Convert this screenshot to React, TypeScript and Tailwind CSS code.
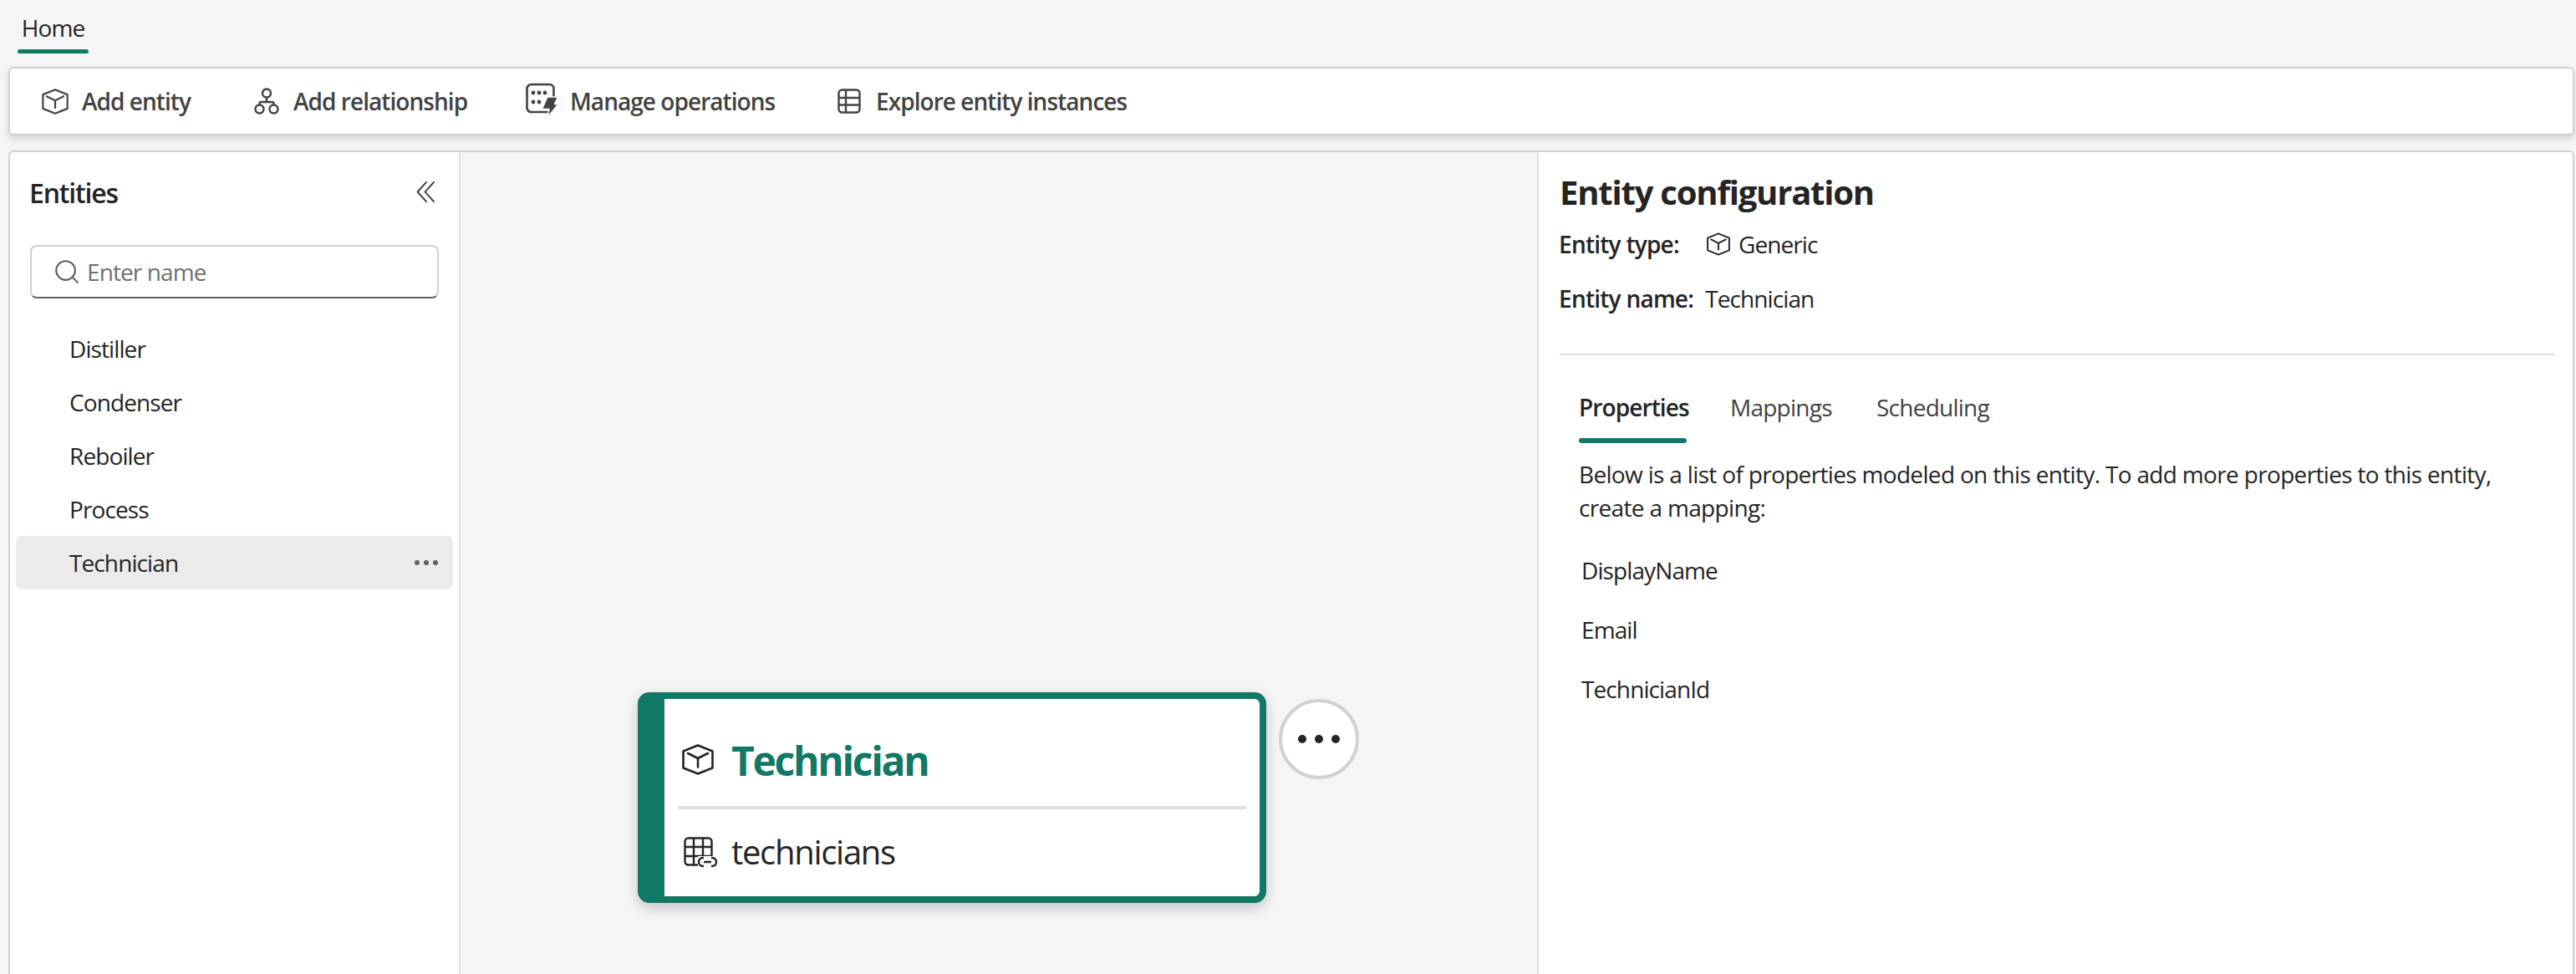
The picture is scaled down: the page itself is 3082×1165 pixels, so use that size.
import { Search } from "lucide-react";

const ENTITIES = ["Distiller", "Condenser", "Reboiler", "Process", "Technician"];
const PROPS = ["DisplayName", "Email", "TechnicianId"];

function CubeIcon({ className }: { className: string }) {
  return (
    <svg viewBox="0 0 38 37" fill="none" stroke="currentColor" strokeWidth={2.6} strokeLinejoin="round" strokeLinecap="round" className={className}>
      <path d="M19 1.5 L36.5 8.5 V28.5 L19 35.5 L1.5 28.5 V8.5 Z" />
      <path d="M7 11 L19 17 L31 11 M19 17 V27.5" />
    </svg>
  );
}

function RelationIcon() {
  return (
    <svg viewBox="0 0 30 32" fill="none" stroke="#424242" strokeWidth={2.4} className="w-[30px] h-[32px] shrink-0">
      <circle cx="15" cy="6.5" r="5" />
      <circle cx="6.5" cy="25.5" r="5" />
      <circle cx="23.5" cy="25.5" r="5" />
      <path d="M15 11.5 V17 M6.5 20.5 V19 Q6.5 17 8.5 17 H21.5 Q23.5 17 23.5 19 V20.5" />
    </svg>
  );
}

function OperationsIcon() {
  return (
    <svg viewBox="0 0 39 42" fill="none" className="w-[39px] h-[42px] shrink-0">
      <rect x="1.5" y="2" width="32" height="33" rx="5" stroke="#424242" strokeWidth={2.6} />
      <g fill="#424242">
        <circle cx="9" cy="12" r="2.4" />
        <circle cx="16" cy="12" r="2.4" />
        <circle cx="23" cy="12" r="2.4" />
        <circle cx="9" cy="23" r="2.4" />
        <circle cx="16" cy="23" r="2.4" />
      </g>
      <path d="M26 17 H38.5 L34.5 25.5 H39 L26 41.5 L28 31.5 H19.5 Z" fill="#424242" stroke="#ffffff" strokeWidth={1.5} strokeLinejoin="round" />
    </svg>
  );
}

function TableIcon() {
  return (
    <svg viewBox="0 0 28 30" fill="none" stroke="#424242" strokeWidth={2.4} className="w-[28px] h-[30px] shrink-0">
      <rect x="1.5" y="1.5" width="25" height="27" rx="4" />
      <path d="M10 1.5 V28.5 M1.5 11 H26.5 M1.5 19.5 H26.5" />
    </svg>
  );
}

function TableLinkIcon() {
  return (
    <svg viewBox="0 0 40 37" fill="none" stroke="#242424" strokeWidth={2.4} className="w-[40px] h-[37px] shrink-0">
      <rect x="1.5" y="1.5" width="32" height="32" rx="4" />
      <path d="M12 1.5 V33.5 M23 1.5 V33.5 M1.5 12 H33.5 M1.5 23 H33.5" />
      <rect x="17" y="23" width="24" height="14" fill="#ffffff" stroke="none" />
      <path d="M24 25 H23 A5 5 0 0 0 23 35 H24 M33 25 H34 A5 5 0 0 1 34 35 H33 M24 30 H33" />
    </svg>
  );
}

function CollapseIcon() {
  return (
    <svg viewBox="0 0 22 25" fill="none" stroke="#424242" strokeWidth={1.9} strokeLinecap="round" strokeLinejoin="round" className="w-[22px] h-[25px] shrink-0">
      <path d="M12 1 L1.5 12.5 L12 24" />
      <path d="M21 1 L10.5 12.5 L21 24" />
    </svg>
  );
}

export default function App() {
  return (
    <div className="w-[3082px] h-[1165px] overflow-hidden bg-[#f5f5f5] font-['Open_Sans',sans-serif] text-[28px] tracking-[-0.9px] text-[#242424]">
      <div className="h-[80px] pl-[21px]">
        <div className="w-[85px] flex flex-col items-center pt-[13px]">
          <span className="h-[40px] leading-[40px] font-medium">Home</span>
          <div className="mt-[6px] h-[5px] w-[85px] rounded-full bg-[#117865]" />
        </div>
      </div>

      <div className="ml-[10px] w-[3070px] h-[82px] flex items-center pl-[38px] bg-white border-2 border-[#d1d1d1] border-b-[#cccccc] rounded-[6px] shadow-[0_4px_8px_rgba(0,0,0,0.14)] font-semibold tracking-[-0.95px] text-[#424242]">
        <CubeIcon className="w-[32px] h-[31px] shrink-0" />
        <span className="ml-[16px] w-[132px] whitespace-nowrap">Add entity</span>
        <div className="ml-[74px]"><RelationIcon /></div>
        <span className="ml-[17px] w-[209px] whitespace-nowrap">Add relationship</span>
        <div className="ml-[69px] -mt-[3px]"><OperationsIcon /></div>
        <span className="ml-[14px] w-[246px] whitespace-nowrap">Manage operations</span>
        <div className="ml-[74px]"><TableIcon /></div>
        <span className="ml-[18px] whitespace-nowrap">Explore entity instances</span>
      </div>

      <div className="ml-[10px] mt-[18px] w-[3070px] h-[985px] flex bg-white border-2 border-b-0 border-[#d1d1d1] rounded-t-[6px]">
        <div className="w-[539px] shrink-0 border-r-2 border-[#e0e0e0]">
          <div className="h-[98px] flex items-center justify-between pl-[23px] pr-[29px]">
            <span className="text-[32px] font-semibold tracking-[-1.2px]">Entities</span>
            <div className="-mt-[4px]"><CollapseIcon /></div>
          </div>
          <div className="mt-[13px] ml-[24px] w-[489px] h-[64px] flex items-center pl-[25px] border-2 border-[#d1d1d1] border-b-[#616161] rounded-[8px] text-[#707070]">
            <Search className="w-[34px] h-[34px] text-[#616161]" strokeWidth={1.5} />
            <span className="ml-[7px]">Enter name</span>
          </div>
          <div className="mt-[28px] mx-[7px]">
            {ENTITIES.map((name) => (
              <div
                key={name}
                className={`h-[64px] flex items-center justify-between pl-[64px] pr-[18px] rounded-[8px] ${name === "Technician" ? "bg-[#ebebeb]" : ""}`}
              >
                <span>{name}</span>
                {name === "Technician" && (
                  <span className="flex gap-[5px]">
                    <span className="size-[6px] rounded-full bg-[#616161]" />
                    <span className="size-[6px] rounded-full bg-[#616161]" />
                    <span className="size-[6px] rounded-full bg-[#616161]" />
                  </span>
                )}
              </div>
            ))}
          </div>
        </div>

        <div className="relative w-[1288px] shrink-0 bg-[#f5f5f5]">
          <div className="absolute left-[212px] top-[646px] w-[752px] h-[252px] bg-white border-[8px] border-l-[32px] border-[#117865] rounded-[14px] shadow-[0_6px_16px_rgba(0,0,0,0.2)]">
            <div className="h-[128px] flex items-center pt-[20px] pl-[21px]">
              <div className="text-[#242424] -mt-[4px]"><CubeIcon className="w-[38px] h-[37px]" /></div>
              <span className="ml-[21px] text-[48px] font-bold tracking-[-2.3px] text-[#117865]">Technician</span>
            </div>
            <div className="mx-[16px] h-[4px] bg-[#e0e0e0]" />
            <div className="h-[104px] flex items-center pl-[23px] pb-[2px]">
              <TableLinkIcon />
              <span className="ml-[17px] text-[40px] tracking-[-1.3px]">technicians</span>
            </div>
          </div>
          <div className="absolute left-[979px] top-[654px] size-[96px] flex items-center justify-center gap-[10px] bg-white border-4 border-[#d1d1d1] rounded-full">
            <span className="size-[10px] rounded-full bg-[#242424]" />
            <span className="size-[10px] rounded-full bg-[#242424]" />
            <span className="size-[10px] rounded-full bg-[#242424]" />
          </div>
        </div>

        <div className="flex-1 border-l-2 border-[#e0e0e0] pl-[23px] pr-[22px] pt-[24px]">
          <div className="ml-[2px] h-[48px] leading-[48px] text-[40px] font-bold tracking-[-1.2px]">Entity configuration</div>
          <div className="mt-[18px] ml-[1px] h-[40px] flex items-center">
            <span className="font-semibold tracking-[-0.75px]">Entity type:</span>
            <CubeIcon className="ml-[33px] w-[28px] h-[28px]" />
            <span className="ml-[10px]">Generic</span>
          </div>
          <div className="mt-[25px] ml-[1px] h-[40px] flex items-center">
            <span className="font-semibold tracking-[-0.75px]">Entity name:</span>
            <span className="ml-[14px]">Technician</span>
          </div>
          <div className="mt-[46px] ml-[2px] h-[2px] bg-[#e0e0e0]" />
          <div className="mt-[42px] pl-[25px] flex tracking-[-0.75px]">
            <div className="w-[129px] flex flex-col">
              <span className="h-[40px] leading-[40px] font-semibold tracking-[-0.9px] whitespace-nowrap">Properties</span>
              <div className="mt-[17px] h-[6px] rounded-full bg-[#117865]" />
            </div>
            <span className="ml-[52px] w-[175px] h-[40px] leading-[40px] text-[#424242]">Mappings</span>
            <span className="h-[40px] leading-[40px] text-[#424242]">Scheduling</span>
          </div>
          <p className="mt-[17px] ml-[25px] leading-[40px] tracking-[-0.67px] whitespace-nowrap">
            Below is a list of properties modeled on this entity. To add more properties to this entity,
            <br />
            create a mapping:
          </p>
          <div className="mt-[35px] ml-[28px] flex flex-col gap-[31px]">
            {PROPS.map((prop) => (
              <div key={prop} className="h-[40px] leading-[40px]">{prop}</div>
            ))}
          </div>
        </div>
      </div>
    </div>
  );
}
